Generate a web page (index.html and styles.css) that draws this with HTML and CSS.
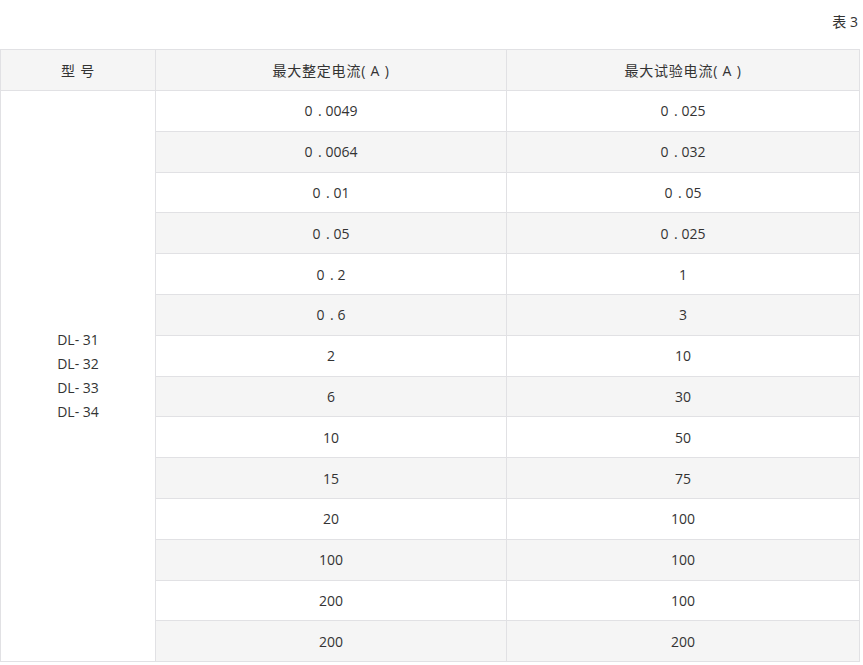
FILE: index.html
```html
<!DOCTYPE html>
<html lang="zh">
<head>
<meta charset="utf-8">
<link rel="stylesheet" href="styles.css">
</head>
<body>
<div class="caption">表 3</div>
<table class="spec">
  <colgroup>
    <col class="c1">
    <col class="c2">
    <col class="c3">
  </colgroup>
  <thead>
    <tr><th>型 号</th><th>最大整定电流( A )</th><th>最大试验电流( A )</th></tr>
  </thead>
  <tbody>
    <tr><td class="model" rowspan="14">DL- 31<br>DL- 32<br>DL- 33<br>DL- 34</td><td>0<span class="pt">.</span>0049</td><td>0<span class="pt">.</span>025</td></tr>
    <tr class="alt"><td>0<span class="pt">.</span>0064</td><td>0<span class="pt">.</span>032</td></tr>
    <tr><td>0<span class="pt">.</span>01</td><td>0<span class="pt">.</span>05</td></tr>
    <tr class="alt"><td>0<span class="pt">.</span>05</td><td>0<span class="pt">.</span>025</td></tr>
    <tr><td>0<span class="pt">.</span>2</td><td>1</td></tr>
    <tr class="alt"><td>0<span class="pt">.</span>6</td><td>3</td></tr>
    <tr><td>2</td><td>10</td></tr>
    <tr class="alt"><td>6</td><td>30</td></tr>
    <tr><td>10</td><td>50</td></tr>
    <tr class="alt"><td>15</td><td>75</td></tr>
    <tr><td>20</td><td>100</td></tr>
    <tr class="alt"><td>100</td><td>100</td></tr>
    <tr><td>200</td><td>100</td></tr>
    <tr class="alt"><td>200</td><td>200</td></tr>
  </tbody>
</table>
</body>
</html>
```
FILE: styles.css
```css
html, body {
  margin: 0;
  padding: 0;
  background: #fff;
}
body {
  font-family: "Open Sans", "Noto Sans CJK SC", sans-serif;
  font-size: 14px;
  color: #333;
}
.caption {
  width: 859px;
  height: 44px;
  line-height: 44px;
  text-align: right;
  margin-bottom: 5px;
  box-sizing: border-box;
  padding-right: 1px;
}
.spec {
  border-collapse: collapse;
  width: 859px;
  table-layout: fixed;
}
.c1 { width: 155px; }
.c2 { width: 351px; }
.c3 { width: 353px; }
.spec th,
.spec td {
  border: 1px solid #e1e1e4;
  text-align: center;
  vertical-align: middle;
  padding: 0;
  height: 39.8px;
  font-weight: normal;
}
.spec thead th {
  background: #f5f5f5;
  height: 40px;
  letter-spacing: 0.8px;
}
.spec tr.alt td {
  background: #f5f5f5;
}
.spec td.model {
  background: #fff;
  line-height: 24px;
}
.pt {
  margin: 0 4px 0 5.5px;
}
```
